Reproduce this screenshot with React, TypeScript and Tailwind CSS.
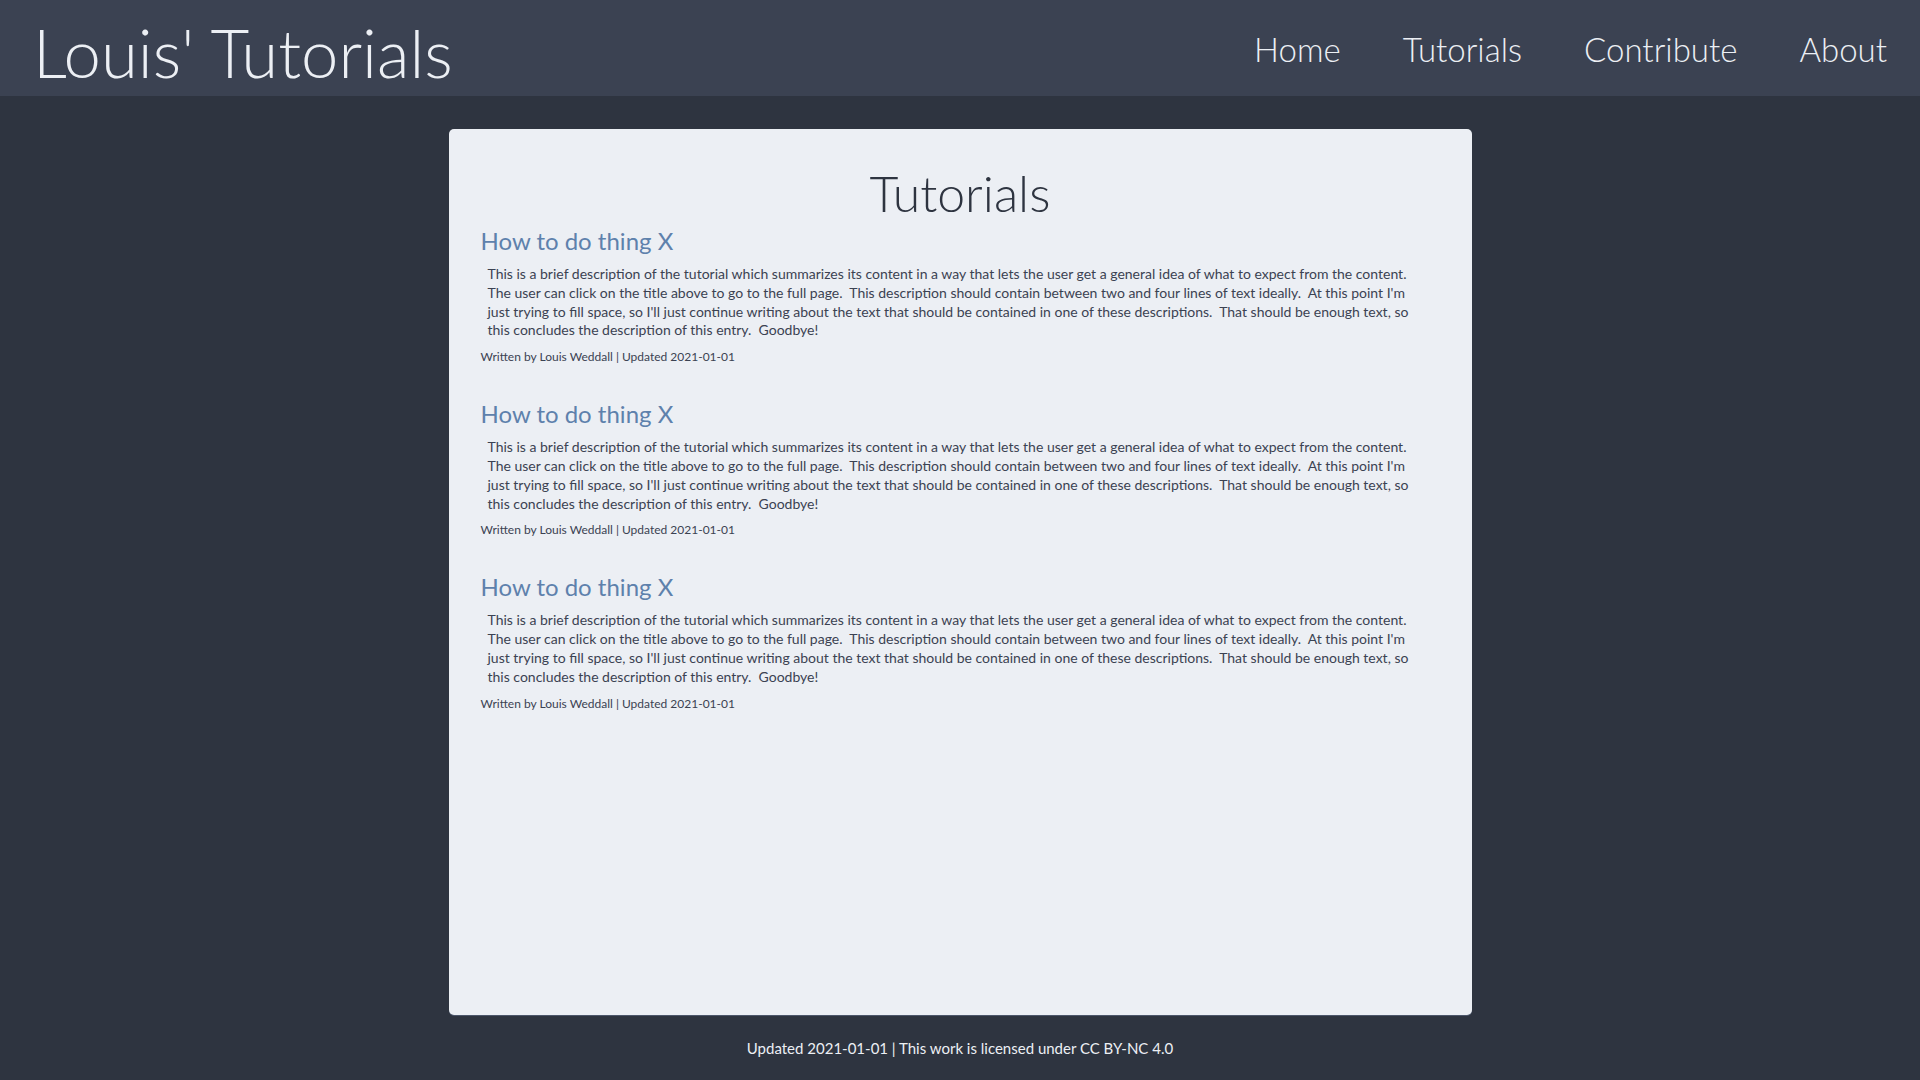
const lines = [
	"This is a brief description of the tutorial which summarizes its content in a way that lets the user get a general idea of what to expect from the content.",
	"The user can click on the title above to go to the full page.\u00a0 This description should contain between two and four lines of text ideally.\u00a0 At this point I'm",
	"just trying to fill space, so I'll just continue writing about the text that should be contained in one of these descriptions.\u00a0 That should be enough text, so",
	"this concludes the description of this entry.\u00a0 Goodbye!",
]

const Entry = () => (
	<div className="flex flex-col">
		<a href="#" className="text-[24px] leading-[30px] text-[#5e81ac]">How to do thing X</a>
		<p className="mt-[9px] ml-[7px] text-[14px] leading-[18.8px] text-[#3b4252]">
			{lines.map((l, i) => (
				<span key={i} className="block whitespace-nowrap">{l}</span>
			))}
		</p>
		<span className="mt-[9px] text-[12px] leading-[16px] text-[#3b4252]">Written by Louis Weddall | Updated 2021-01-01</span>
	</div>
)

export default function App() {
	return (
		<div className="flex flex-col min-h-screen bg-[#2e3440] text-[#eceff4] font-['Lato','Liberation_Sans',sans-serif]">
			<header className="flex items-center justify-between h-[96px] px-[33px] bg-[#3b4252]">
				<h1 className="pt-[8px] text-[67px] leading-none font-light">Louis' Tutorials</h1>
				<nav className="flex gap-[62px] pt-[4px] text-[33px] font-light">
					<a href="#">Home</a>
					<a href="#">Tutorials</a>
					<a href="#">Contribute</a>
					<a href="#">About</a>
				</nav>
			</header>
			<main className="flex justify-center pt-[33px]">
				<div className="flex flex-col w-[1023px] h-[886px] rounded-[5px] bg-[#eceff4] px-[32px] pt-[35px] text-[#2e3440] shadow-[0_1px_0_#4c566a]">
					<h2 className="text-center text-[50px] leading-[58px] font-light">Tutorials</h2>
					<div className="flex flex-col gap-[34px] mt-[4px]">
						<Entry />
						<Entry />
						<Entry />
					</div>
				</div>
			</main>
			<footer className="flex justify-center pt-[24px] text-[15px] leading-[18px]">
				Updated 2021-01-01 | This work is licensed under CC BY-NC 4.0
			</footer>
		</div>
	)
}
